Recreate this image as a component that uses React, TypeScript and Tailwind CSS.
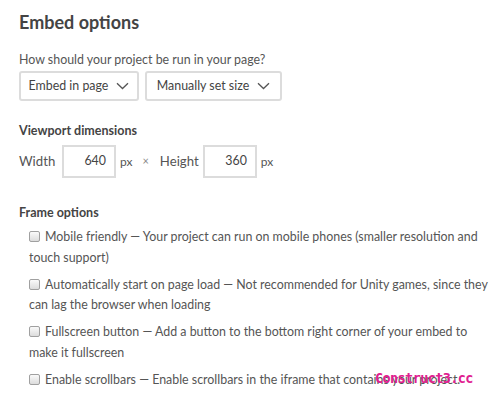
import React from 'react';

const FONT = "font-['Lato','Liberation_Sans',sans-serif]";

function Chevron() {
  return (
    <svg width="13" height="8" viewBox="0 0 13 8" className="ml-[8px] shrink-0">
      <path d="M1 1.2 L6.5 6.5 L12 1.2" fill="none" stroke="#555" strokeWidth="1.3" />
    </svg>
  );
}

function Select({ label, width }: { label: string; width: string }) {
  return (
    <div
      className={`${width} h-[30px] flex items-center justify-center border-2 border-[#dcdcdc] rounded-[3px] bg-white text-[12.4px] text-[#444]`}
    >
      <span>{label}</span>
      <Chevron />
    </div>
  );
}

function NumberBox({ value }: { value: string }) {
  return (
    <div className="w-[54px] h-[33px] border-2 border-[#dcdcdc] flex items-center justify-end pr-[8px] text-[12.4px] text-[#444]">
      {value}
    </div>
  );
}

const OPTIONS = [
  {
    title: 'Mobile friendly',
    text: 'Your project can run on mobile phones (smaller resolution and touch support)',
  },
  {
    title: 'Automatically start on page load',
    text: 'Not recommended for Unity games, since they can lag the browser when loading',
  },
  {
    title: 'Fullscreen button',
    text: 'Add a button to the bottom right corner of your embed to make it fullscreen',
  },
  {
    title: 'Enable scrollbars',
    text: 'Enable scrollbars in the iframe that contains your project.',
  },
];

export default function App() {
  return (
    <div className={`${FONT} relative w-[504px] h-[413px] bg-white text-[#555] overflow-hidden`}>
      <div className="pl-[19px] pt-[10px]">
        <h2 className="text-[18px] font-bold text-[#444] leading-[24px]">Embed options</h2>

        <p className="mt-[18px] text-[12.4px] leading-[16px] text-[#555]">
          How should your project be run in your page?
        </p>
        <div className="mt-[3px] flex gap-[6px]">
          <Select label="Embed in page" width="w-[120px]" />
          <Select label="Manually set size" width="w-[137px]" />
        </div>

        <h3 className="mt-[22px] text-[12.5px] font-bold text-[#444] leading-[16px]">
          Viewport dimensions
        </h3>
        <div className="mt-[6px] flex items-center text-[13.2px] text-[#555]">
          <span className="w-[43px]">Width</span>
          <NumberBox value="640" />
          <span className="ml-[4px] text-[12px]">px</span>
          <span className="ml-[10px] mr-[11px] text-[11px] text-[#888]">×</span>
          <span className="w-[43px]">Height</span>
          <NumberBox value="360" />
          <span className="ml-[4px] text-[12px]">px</span>
        </div>

        <h3 className="mt-[27px] text-[12.5px] font-bold text-[#444] leading-[16px]">Frame options</h3>

        <div className="mt-[6px] pl-[10px] pr-[12px] flex flex-col gap-[6.5px]">
          {OPTIONS.map((o) => (
            <p key={o.title} className="text-[12.4px] leading-[20.5px] text-[#555]">
              <span className="inline-block align-[-1px] w-[11px] h-[11px] mr-[5px] rounded-[2px] border border-[#a0a0a0] bg-gradient-to-b from-[#fafafa] to-[#dcdcdc]" />
              {o.title} — {o.text}
            </p>
          ))}
        </div>
      </div>

      <div className="absolute left-[375px] top-[370px] leading-[16px] text-[13.5px] font-bold tracking-[-0.6px] text-[#e0208f] font-['DejaVu_Sans_Mono',monospace]">
        Construct3.cc
      </div>
    </div>
  );
}
